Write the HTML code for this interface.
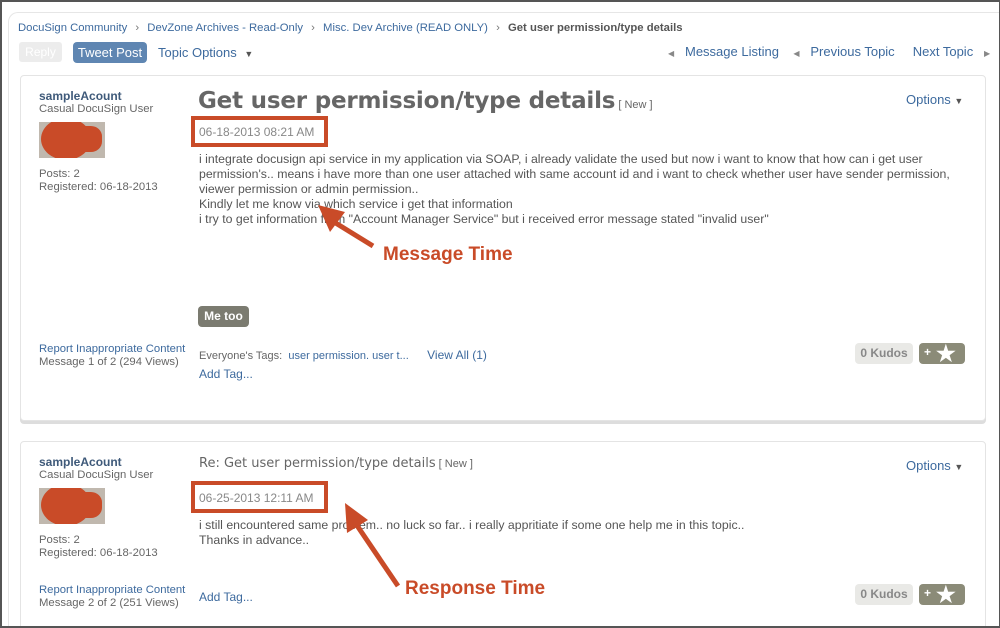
<!DOCTYPE html>
<html style="overflow:hidden;width:1000px;height:628px"><head><style>
*{margin:0;padding:0;box-sizing:border-box}
body{width:1000px;height:628px;overflow:hidden;background:#fff;font-family:"Liberation Sans",Arial,sans-serif;font-size:12px;color:#666;position:relative}
.frame{position:absolute;left:0;top:0;width:1000px;height:628px;border:2px solid #555;border-right-width:1px}
.outer{position:absolute;left:8px;top:12px;width:992px;height:616px;border:1px solid #e6e6e6;border-bottom:none;border-right:none;border-radius:10px 0 0 0}
.a{position:absolute;white-space:nowrap}
.l{color:#3d6a9e}
.box{position:absolute;left:20px;width:966px;border:1px solid #e4e4e4;border-radius:4px;background:#fff}
.red{position:absolute;border:4px solid #c94b28}
.kud{position:absolute;width:58px;height:21px;background:#e9e9e6;border-radius:4px;font-weight:bold;color:#888;font-size:12px;text-align:center;line-height:21px}
.kbtn{position:absolute;width:46px;height:21px;background:#8b8b78;border-radius:4px;color:#fff;font-weight:bold}
.ann{position:absolute;color:#c94b28;font-weight:bold;font-size:19px;white-space:nowrap}
.lc{font-size:11.3px}
</style></head><body>
<div class="outer"></div>
<div class="a l" style="left:18px;top:22px;font-size:11.3px">DocuSign Community <span style="color:#777;margin:0 5px">›</span> DevZone Archives - Read-Only <span style="color:#777;margin:0 5px">›</span> Misc. Dev Archive (READ ONLY) <span style="color:#777;margin:0 5px">›</span> <b style="color:#555">Get user permission/type details</b></div>
<div class="a" style="left:19px;top:42px;width:43px;height:20px;background:#ececec;border-radius:3px;color:#fff;text-align:center;line-height:20px">Reply</div>
<div class="a" style="left:73px;top:42px;width:74px;height:21px;background:#5f86b2;border-radius:4px;color:#fff;text-align:center;line-height:21px;font-size:13px">Tweet Post</div>
<div class="a l" style="left:158px;top:45px;font-size:13px">Topic Options <span style="color:#555;font-size:9px;margin-left:4px">▼</span></div>
<div class="a l" style="left:668px;top:44px;font-size:13px"><span style="color:#888;font-size:8px">◀</span>&nbsp;&nbsp; Message Listing &nbsp;&nbsp;&nbsp;<span style="color:#888;font-size:8px">◀</span>&nbsp;&nbsp; Previous Topic &nbsp;&nbsp;&nbsp; Next Topic &nbsp;&nbsp;<span style="color:#888;font-size:8px">▶</span></div>

<div class="box" style="top:75px;height:346px;box-shadow:0 3px 0 #ddd"></div>
<div class="box" style="top:441px;height:200px"></div>

<!-- post 1 -->
<div class="a" style="left:39px;top:89px;font-weight:bold;color:#3f5a7a;font-size:12px">sampleAcount</div>
<div class="a lc" style="left:39px;top:103px">Casual DocuSign User</div>
<div class="a" style="left:39px;top:122px;width:66px;height:36px;background:#c0b8ae;overflow:hidden"><div style="position:absolute;left:2px;top:-4px;width:50px;height:42px;background:#c94b28;border-radius:50%"></div><div style="position:absolute;left:35px;top:4px;width:28px;height:26px;background:#c94b28;border-radius:40%"></div></div>
<div class="a lc" style="left:39px;top:168px">Posts: 2</div>
<div class="a lc" style="left:39px;top:181px">Registered: 06-18-2013</div>
<div class="a" style="left:198px;top:88px;font-family:'DejaVu Sans',sans-serif;font-weight:bold;font-size:23px;color:#666;letter-spacing:-0.2px">Get user permission/type details<span style="font-family:'Liberation Sans';font-weight:normal;font-size:11px;color:#666;letter-spacing:0"> [ New ]</span></div>
<div class="a l" style="left:906px;top:92px;font-size:13px">Options <span style="color:#555;font-size:9px">▼</span></div>
<div class="red" style="left:191px;top:116px;width:137px;height:31px"></div>
<div class="a" style="left:199px;top:125px;color:#888">06-18-2013 08:21 AM</div>
<div class="a" style="left:199px;top:152px;line-height:15px;color:#555;font-size:12.3px">i integrate docusign api service in my application via SOAP, i already validate the used but now i want to know that how can i get user<br>permission's.. means i have more than one user attached with same account id and i want to check whether user have sender permission,<br>viewer permission or admin permission..<br>Kindly let me know via which service i get that information<br>i try to get information from "Account Manager Service" but i received error message stated "invalid user"</div>
<div class="a" style="left:198px;top:306px;width:51px;height:21px;background:#7b7b70;border-radius:4px;color:#fff;font-weight:bold;text-align:center;line-height:21px">Me too</div>
<div class="a l lc" style="left:39px;top:343px">Report Inappropriate Content</div>
<div class="a lc" style="left:39px;top:356px">Message 1 of 2 (294 Views)</div>
<div class="a" style="left:199px;top:348px;font-size:11px">Everyone's Tags:&nbsp; <span class="l">user permission. user t...</span>&nbsp;&nbsp;&nbsp;&nbsp;&nbsp; <span class="l" style="font-size:12px">View All (1)</span></div>
<div class="a l" style="left:199px;top:367px">Add Tag...</div>
<div class="kud" style="left:855px;top:343px">0 Kudos</div>
<div class="kbtn" style="left:919px;top:343px"><span style="position:absolute;left:5px;top:2px">+</span><span style="position:absolute;left:17px;top:-2px;font-size:22px">★</span></div>

<!-- post 2 -->
<div class="a" style="left:39px;top:455px;font-weight:bold;color:#3f5a7a;font-size:12px">sampleAcount</div>
<div class="a lc" style="left:39px;top:469px">Casual DocuSign User</div>
<div class="a" style="left:39px;top:488px;width:66px;height:36px;background:#c0b8ae;overflow:hidden"><div style="position:absolute;left:2px;top:-4px;width:50px;height:42px;background:#c94b28;border-radius:50%"></div><div style="position:absolute;left:35px;top:4px;width:28px;height:26px;background:#c94b28;border-radius:40%"></div></div>
<div class="a lc" style="left:39px;top:534px">Posts: 2</div>
<div class="a lc" style="left:39px;top:547px">Registered: 06-18-2013</div>
<div class="a" style="left:199px;top:456px;font-family:'DejaVu Sans',sans-serif;font-size:13px;color:#666">Re: Get user permission/type details<span style="font-family:'Liberation Sans';font-size:11px"> [ New ]</span></div>
<div class="a l" style="left:906px;top:458px;font-size:13px">Options <span style="color:#555;font-size:9px">▼</span></div>
<div class="red" style="left:191px;top:481px;width:137px;height:32px"></div>
<div class="a" style="left:199px;top:491px;color:#888">06-25-2013 12:11 AM</div>
<div class="a" style="left:199px;top:518px;line-height:15px;color:#555;font-size:12.3px">i still encountered same problem.. no luck so far.. i really appritiate if some one help me in this topic..<br>Thanks in advance..</div>
<div class="a l lc" style="left:39px;top:584px">Report Inappropriate Content</div>
<div class="a lc" style="left:39px;top:597px">Message 2 of 2 (251 Views)</div>
<div class="a l" style="left:199px;top:590px">Add Tag...</div>
<div class="kud" style="left:855px;top:584px">0 Kudos</div>
<div class="kbtn" style="left:919px;top:584px"><span style="position:absolute;left:5px;top:2px">+</span><span style="position:absolute;left:17px;top:-2px;font-size:22px">★</span></div>

<svg class="a" style="left:0;top:0" width="1000" height="628">
<line x1="373" y1="246" x2="334" y2="222" stroke="#c94b28" stroke-width="5"/>
<polygon points="318,205 345,212 330,232" fill="#c94b28"/>
<line x1="398" y1="586" x2="356" y2="524" stroke="#c94b28" stroke-width="5"/>
<polygon points="345,503 368,520 347,533" fill="#c94b28"/>
</svg>
<div class="ann" style="left:383px;top:244px">Message Time</div>
<div class="ann" style="left:405px;top:578px">Response Time</div>
<div class="frame"></div>
</body></html>
